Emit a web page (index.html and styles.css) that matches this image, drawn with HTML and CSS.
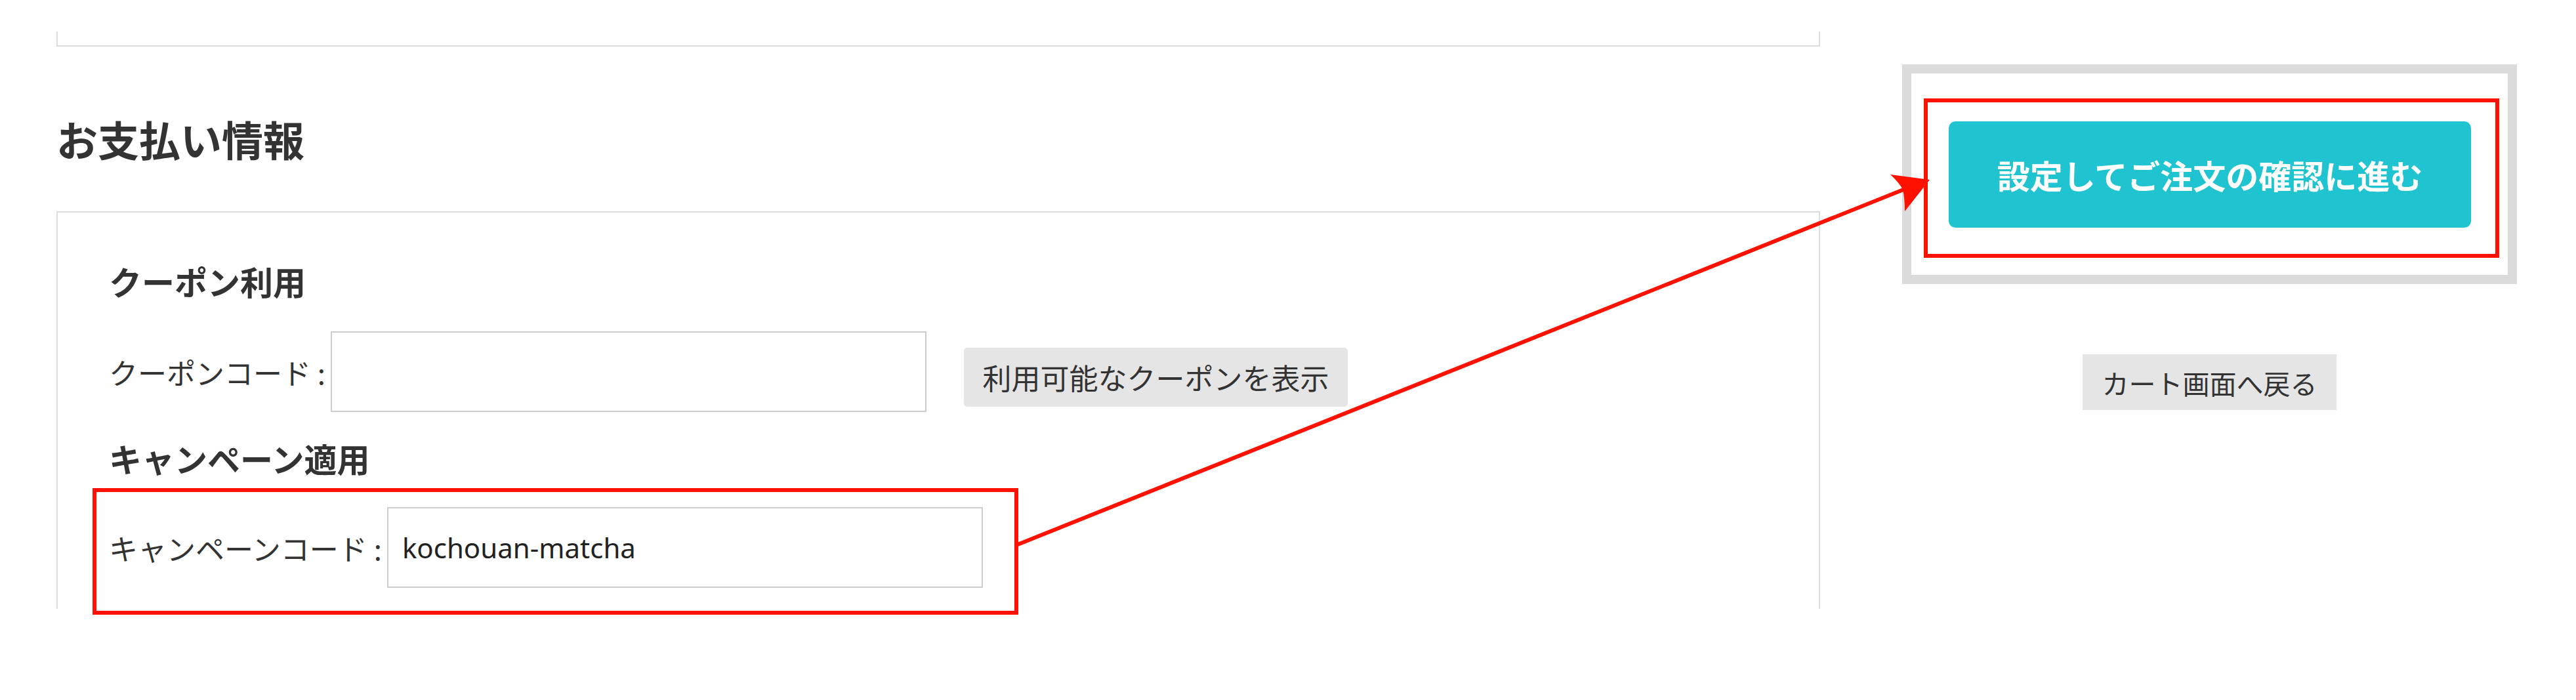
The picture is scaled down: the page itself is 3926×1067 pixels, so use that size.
FILE: index.html
```html
<!DOCTYPE html>
<html lang="ja">
<head>
    <meta charset="UTF-8">
    <meta name="viewport" content="width=device-width, initial-scale=1.0">
    <title>お支払い情報</title>
    <link rel="stylesheet" href="styles.css">
</head>
<body>

    <div class="page">
        <div class="main-column">
            <div class="section-box section-box-top"></div>

            <h2 class="section-title">お支払い情報</h2>

            <div class="section-box payment-box">
                <h3 class="form-title">クーポン利用</h3>
                <div class="form-row">
                    <label class="form-label" for="couponCode">クーポンコード :</label>
                    <input type="text" id="couponCode" class="text-input">
                    <button type="button" class="sub-button coupon-button">利用可能なクーポンを表示</button>
                </div>

                <h3 class="form-title campaign-title">キャンペーン適用</h3>
                <div class="form-row highlight highlight-row">
                    <label class="form-label" for="campaignCode">キャンペーンコード :</label>
                    <input type="text" id="campaignCode" class="text-input" value="kochouan-matcha">
                </div>
            </div>
        </div>

        <div class="side-column">
            <div class="order-box">
                <div class="highlight highlight-button">
                    <button type="button" class="primary-button">設定してご注文の確認に進む</button>
                </div>
            </div>
            <button type="button" class="sub-button back-button">カート画面へ戻る</button>
        </div>
    </div>

    <!-- annotation arrow from the campaign code to the confirm button -->
    <svg class="annotation-arrow" width="3926" height="1067" viewBox="0 0 3926 1067">
        <line x1="1551" y1="830" x2="2901" y2="289" stroke="#ff1100" stroke-width="6"/>
        <path d="M2941 274 L2881 266 Q2895 279 2900 289 Q2903 302 2903 322 Z" fill="#ff1100"/>
    </svg>

</body>
</html>
```

FILE: styles.css
```css
html, body {
    min-height: 1067px;
}
body {
    font-family: "Noto Sans CJK JP", "Noto Sans", sans-serif;
    background-color: #fff;
    color: #333;
    margin: 0;
    position: relative;
}
.page {
    display: flex;
    align-items: flex-start;
    gap: 125px;
    padding: 48px 0 0 86px;
}
.main-column {
    width: 2688px;
}
.section-box {
    box-sizing: border-box;
    border: 2px solid #dddddd;
}
.section-box-top {
    height: 23px;
    border-top: none;
}
.section-title {
    font-size: 63px;
    font-weight: bold;
    line-height: 80px;
    margin: 100px 0 71px;
    color: #333;
}
.payment-box {
    height: 606px;
    border-bottom: none;
    padding: 74px 0 0 78px;
}
.form-title {
    font-size: 50px;
    font-weight: bold;
    line-height: 60px;
    margin: 0 0 47px;
    color: #333;
}
.campaign-title {
    margin: 40px 0 16px;
}
.form-row {
    display: flex;
    align-items: center;
}
.form-label {
    font-size: 44px;
    line-height: 60px;
    margin-right: 8px;
    color: #333;
}
.text-input {
    box-sizing: border-box;
    width: 908px;
    height: 123px;
    border: 2px solid #cccccc;
    border-radius: 0;
    padding: 0 21px;
    font-family: "Noto Sans", sans-serif;
    font-size: 42px;
    color: #222;
    outline: none;
}
.sub-button {
    font-family: "Noto Sans CJK JP", sans-serif;
    background-color: #e5e5e5;
    color: #333;
    border: none;
    cursor: pointer;
    padding: 0;
}
.coupon-button {
    width: 585px;
    height: 90px;
    margin: 17px 0 0 57px;
    border-radius: 5px;
    font-size: 44px;
}
.highlight {
    border: 6px solid #ff1100;
}
.highlight-row {
    position: relative;
    width: max-content;
    margin-left: -25px;
    padding: 23px 48px 35px 19px;
    background-color: #fff;
}
.side-column {
    width: 937px;
    margin-top: 50px;
    display: flex;
    flex-direction: column;
    align-items: center;
}
.order-box {
    box-sizing: border-box;
    width: 100%;
    border: 14px solid #dbdbdb;
}
.highlight-button {
    margin: 38px 13px 26px 19px;
    padding: 29px 37px 40px 32px;
}
.primary-button {
    display: block;
    width: 100%;
    height: 162px;
    background-color: #20c4d0;
    color: #fff;
    border: none;
    border-radius: 10px;
    font-family: "Noto Sans CJK JP", sans-serif;
    font-size: 50px;
    font-weight: bold;
    cursor: pointer;
}
.back-button {
    width: 387px;
    height: 85px;
    margin-top: 107px;
    font-size: 41px;
}
.annotation-arrow {
    position: absolute;
    top: 0;
    left: 0;
    pointer-events: none;
}
```
